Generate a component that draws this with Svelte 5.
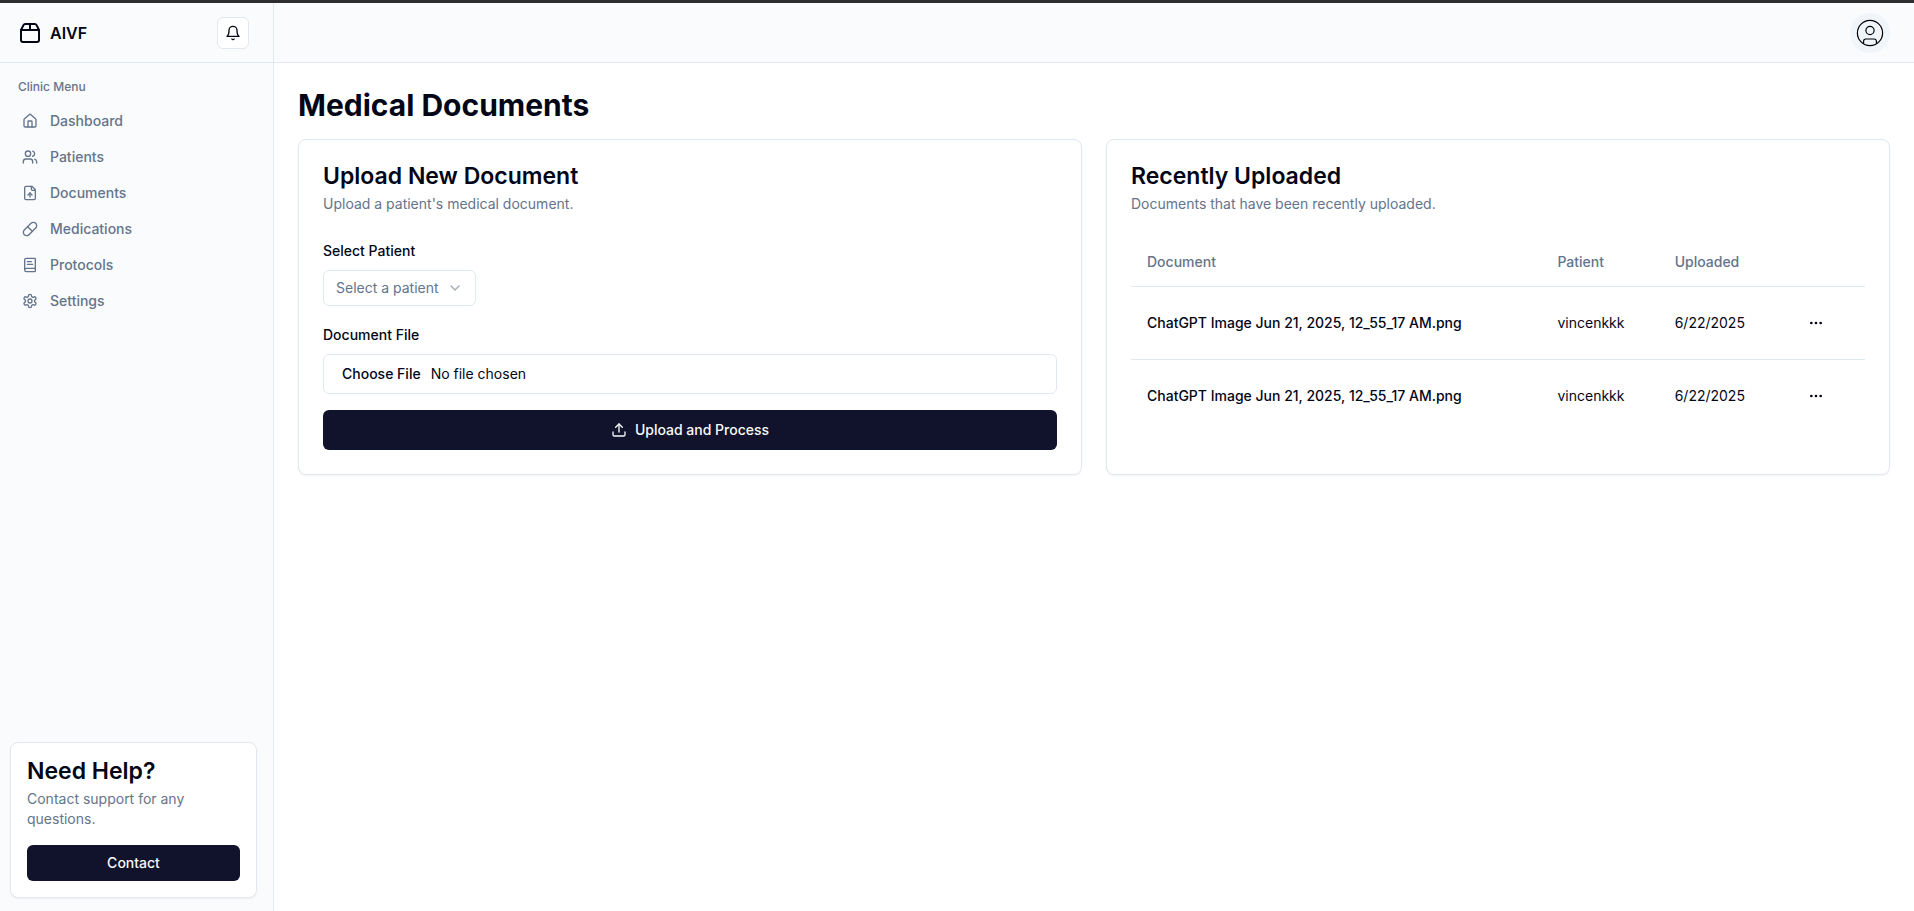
<script>
  const nav = [
    {
      label: 'Dashboard',
      paths: [
        'M15 21v-8a1 1 0 0 0-1-1h-4a1 1 0 0 0-1 1v8',
        'M3 10a2 2 0 0 1 .709-1.528l7-5.999a2 2 0 0 1 2.582 0l7 5.999A2 2 0 0 1 21 10v9a2 2 0 0 1-2 2H5a2 2 0 0 1-2-2z'
      ]
    },
    {
      label: 'Patients',
      paths: [
        'M16 21v-2a4 4 0 0 0-4-4H6a4 4 0 0 0-4 4v2',
        'M5 7a4 4 0 1 0 8 0a4 4 0 1 0-8 0',
        'M22 21v-2a4 4 0 0 0-3-3.87',
        'M16 3.13a4 4 0 0 1 0 7.75'
      ]
    },
    {
      label: 'Documents',
      paths: [
        'M15 2H6a2 2 0 0 0-2 2v16a2 2 0 0 0 2 2h12a2 2 0 0 0 2-2V7Z',
        'M14 2v4a2 2 0 0 0 2 2h4',
        'M12 12v6',
        'm15 15-3-3-3 3'
      ]
    },
    {
      label: 'Medications',
      paths: [
        'm10.5 20.5 10-10a4.95 4.95 0 1 0-7-7l-10 10a4.95 4.95 0 1 0 7 7Z',
        'm8.5 8.5 7 7'
      ]
    },
    {
      label: 'Protocols',
      paths: [
        'M4 19.5v-15A2.5 2.5 0 0 1 6.5 2H19a1 1 0 0 1 1 1v18a1 1 0 0 1-1 1H6.5a1 1 0 0 1 0-5H20',
        'M8 11h8',
        'M8 7h6'
      ]
    },
    {
      label: 'Settings',
      paths: [
        'M12.22 2h-.44a2 2 0 0 0-2 2v.18a2 2 0 0 1-1 1.73l-.43.25a2 2 0 0 1-2 0l-.15-.08a2 2 0 0 0-2.73.73l-.22.38a2 2 0 0 0 .73 2.73l.15.1a2 2 0 0 1 1 1.72v.51a2 2 0 0 1-1 1.74l-.15.09a2 2 0 0 0-.73 2.73l.22.38a2 2 0 0 0 2.73.73l.15-.08a2 2 0 0 1 2 0l.43.25a2 2 0 0 1 1 1.73V20a2 2 0 0 0 2 2h.44a2 2 0 0 0 2-2v-.18a2 2 0 0 1 1-1.73l.43-.25a2 2 0 0 1 2 0l.15.08a2 2 0 0 0 2.73-.73l.22-.39a2 2 0 0 0-.73-2.73l-.15-.08a2 2 0 0 1-1-1.74v-.5a2 2 0 0 1 1-1.74l.15-.09a2 2 0 0 0 .73-2.73l-.22-.38a2 2 0 0 0-2.73-.73l-.15.08a2 2 0 0 1-2 0l-.43-.25a2 2 0 0 1-1-1.73V4a2 2 0 0 0-2-2z',
        'M9 12a3 3 0 1 0 6 0a3 3 0 1 0-6 0'
      ]
    }
  ];

  const documents = [
    { id: 1, name: 'ChatGPT Image Jun 21, 2025, 12_55_17 AM.png', patient: 'vincenkkk', uploaded: '6/22/2025' },
    { id: 2, name: 'ChatGPT Image Jun 21, 2025, 12_55_17 AM.png', patient: 'vincenkkk', uploaded: '6/22/2025' }
  ];
</script>

{#snippet icon(paths, size)}
  <svg class="icon" width={size} height={size} viewBox="0 0 24 24" aria-hidden="true">
    {#each paths as d}<path {d} />{/each}
  </svg>
{/snippet}

<div class="app">
  <aside class="sidebar">
    <div class="brand-bar">
      <a class="brand" href="#home">
        {@render icon(['M3 9h18v10a2 2 0 0 1-2 2H5a2 2 0 0 1-2-2V9Z', 'm3 9 2.45-4.9A2 2 0 0 1 7.24 3h9.52a2 2 0 0 1 1.8 1.1L21 9', 'M12 3v6'], 24)}
        <span>AIVF</span>
      </a>
      <button class="bell" type="button" aria-label="Toggle notifications">
        {@render icon(['M6 8a6 6 0 0 1 12 0c0 7 3 9 3 9H3s3-2 3-9', 'M10.3 21a1.94 1.94 0 0 0 3.4 0'], 16)}
      </button>
    </div>
    <nav>
      <h2 class="menu-title">Clinic Menu</h2>
      {#each nav as item}
        <a class="nav-item" href="#{item.label.toLowerCase()}">
          {@render icon(item.paths, 16)}
          {item.label}
        </a>
      {/each}
    </nav>
    <section class="card help">
      <h3>Need Help?</h3>
      <p class="muted">Contact support for any questions.</p>
      <button class="primary small" type="button">Contact</button>
    </section>
  </aside>

  <div class="content">
    <header>
      <button class="avatar" type="button" aria-label="Toggle user menu">
        <svg class="user" width="28" height="28" viewBox="0 0 28 28" aria-hidden="true">
          <circle cx="14" cy="14" r="12.6" />
          <circle cx="14" cy="11.5" r="4.1" />
          <path d="M7.6 24.6v-2.4a2.2 2.2 0 0 1 2.2-2.2h8.4a2.2 2.2 0 0 1 2.2 2.2v2.4" />
        </svg>
      </button>
    </header>
    <main>
      <h1>Medical Documents</h1>
      <div class="grid">
        <section class="card panel">
          <h3>Upload New Document</h3>
          <p class="muted">Upload a patient's medical document.</p>
          <form onsubmit={(e) => e.preventDefault()}>
            <div class="field">
              <label for="patient">Select Patient</label>
              <div class="select">
                <select id="patient">
                  <option>Select a patient</option>
                </select>
                <svg class="icon chevron" width="16" height="16" viewBox="0 0 24 24" aria-hidden="true"><path d="m6 9 6 6 6-6" /></svg>
              </div>
            </div>
            <div class="field">
              <label for="file">Document File</label>
              <input id="file" type="file" />
            </div>
            <button class="primary" type="submit">
              {@render icon(['M21 15v4a2 2 0 0 1-2 2H5a2 2 0 0 1-2-2v-4', 'm17 8-5-5-5 5', 'M12 3v12'], 16)}
              Upload and Process
            </button>
          </form>
        </section>

        <section class="card panel">
          <h3>Recently Uploaded</h3>
          <p class="muted">Documents that have been recently uploaded.</p>
          <table>
            <thead>
              <tr>
                <th scope="col">Document</th>
                <th scope="col">Patient</th>
                <th scope="col">Uploaded</th>
                <td></td>
              </tr>
            </thead>
            <tbody>
              {#each documents as doc (doc.id)}
                <tr>
                  <td class="name">{doc.name}</td>
                  <td>{doc.patient}</td>
                  <td>{doc.uploaded}</td>
                  <td>
                    <button class="more" type="button" aria-label="Open menu">
                      <svg class="icon dots" width="16" height="16" viewBox="0 0 24 24" aria-hidden="true">
                        <circle cx="12" cy="12" r="1" /><circle cx="19" cy="12" r="1" /><circle cx="5" cy="12" r="1" />
                      </svg>
                    </button>
                  </td>
                </tr>
              {/each}
            </tbody>
          </table>
        </section>
      </div>
    </main>
  </div>
</div>

<style>
  :global(body) {
    margin: 0;
    background: #fff;
  }
  .app, .app :global(*) {
    box-sizing: border-box;
  }
  .app {
    display: grid;
    grid-template-columns: 274px minmax(0, 1fr);
    min-height: 100vh;
    border-top: 3px solid #2e2e2e;
    font-family: Inter, "Liberation Sans", sans-serif;
    font-size: 14px;
    line-height: 20px;
    color: #020617;
  }
  h1, h2, h3, p {
    margin: 0;
  }
  button, select, input {
    font: inherit;
    color: inherit;
  }
  button {
    display: flex;
    align-items: center;
    justify-content: center;
    padding: 0;
    border: 0;
    background: none;
    cursor: pointer;
  }
  a {
    color: inherit;
    text-decoration: none;
  }
  .icon {
    flex: none;
    fill: none;
    stroke: currentColor;
    stroke-width: 2;
    stroke-linecap: round;
    stroke-linejoin: round;
  }
  .sidebar {
    display: flex;
    flex-direction: column;
    border-right: 1px solid #e2e8f0;
    background: #fafbfd;
  }
  .brand-bar {
    display: flex;
    align-items: center;
    justify-content: space-between;
    height: 60px;
    padding: 0 24px 0 18px;
    border-bottom: 1px solid #e2e8f0;
  }
  .brand {
    display: flex;
    align-items: center;
    gap: 8px;
    font-size: 16px;
    line-height: 24px;
    font-weight: 600;
  }
  .bell {
    width: 32px;
    height: 32px;
    border: 1px solid #e2e8f0;
    border-radius: 6px;
    background: #fff;
  }
  nav {
    padding: 8px 18px;
  }
  .menu-title {
    font-size: 12px;
    line-height: 32px;
    font-weight: 500;
    color: #64748b;
  }
  .nav-item {
    display: flex;
    align-items: center;
    gap: 12px;
    padding: 8px 4px;
    font-weight: 500;
    color: #64748b;
  }
  .card {
    border: 1px solid #e2e8f0;
    border-radius: 8px;
    background: #fff;
    box-shadow: 0 1px 2px rgb(0 0 0 / 5%);
  }
  .help {
    margin: auto 16px 13px 10px;
    padding: 16px;
  }
  h3 {
    margin-bottom: 6px;
    font-size: 23px;
    line-height: 24px;
    font-weight: 600;
  }
  .muted {
    color: #64748b;
  }
  .primary {
    gap: 8px;
    width: 100%;
    height: 40px;
    border-radius: 6px;
    background: #11122b;
    color: #f8fafc;
    font-weight: 500;
  }
  .small {
    height: 36px;
    margin-top: 16px;
  }
  header {
    display: flex;
    align-items: center;
    justify-content: flex-end;
    height: 60px;
    padding: 0 24px;
    border-bottom: 1px solid #e2e8f0;
    background: #fafbfd;
  }
  .avatar {
    width: 40px;
    height: 40px;
    border-radius: 50%;
    background: #f0f5fa;
  }
  .user {
    fill: none;
    stroke: #000;
    stroke-width: 1.2;
  }
  main {
    padding: 24px;
  }
  h1 {
    margin-bottom: 16px;
    font-size: 30px;
    line-height: 36px;
    font-weight: 700;
  }
  .grid {
    display: grid;
    grid-template-columns: repeat(2, minmax(0, 1fr));
    gap: 24px;
  }
  .panel {
    padding: 24px;
  }
  form {
    display: flex;
    flex-direction: column;
    gap: 16px;
    margin-top: 24px;
  }
  .field {
    display: flex;
    flex-direction: column;
    align-items: flex-start;
    gap: 8px;
  }
  label {
    padding-top: 2px;
    line-height: 22px;
    font-weight: 500;
  }
  .select {
    display: grid;
    align-items: center;
  }
  .select > :global(*) {
    grid-area: 1 / 1;
  }
  select {
    height: 36px;
    padding: 0 36px 0 12px;
    border: 1px solid #e2e8f0;
    border-radius: 6px;
    background: #fff;
    color: #64748b;
    appearance: none;
  }
  .chevron {
    justify-self: end;
    margin-right: 13px;
    color: #64748b;
    opacity: 0.6;
    pointer-events: none;
  }
  input {
    width: 100%;
    height: 40px;
    padding: 8px 12px;
    border: 1px solid #e2e8f0;
    border-radius: 6px;
    background: #fff;
  }
  input::file-selector-button {
    padding: 1px 6px;
    margin-right: 4px;
    border: 0;
    background: transparent;
    color: #020617;
    font: inherit;
    font-weight: 500;
  }
  table {
    width: 100%;
    margin-top: 24px;
    border-collapse: collapse;
  }
  th {
    height: 48px;
    padding: 0 16px;
    text-align: left;
    font-weight: 500;
    color: #64748b;
  }
  td {
    padding: 0 16px;
  }
  tbody td {
    padding: 16px;
  }
  thead tr, tbody tr:not(:last-child) {
    border-bottom: 1px solid #e2e8f0;
  }
  .name {
    font-weight: 500;
  }
  .more {
    width: 40px;
    height: 40px;
  }
</style>
